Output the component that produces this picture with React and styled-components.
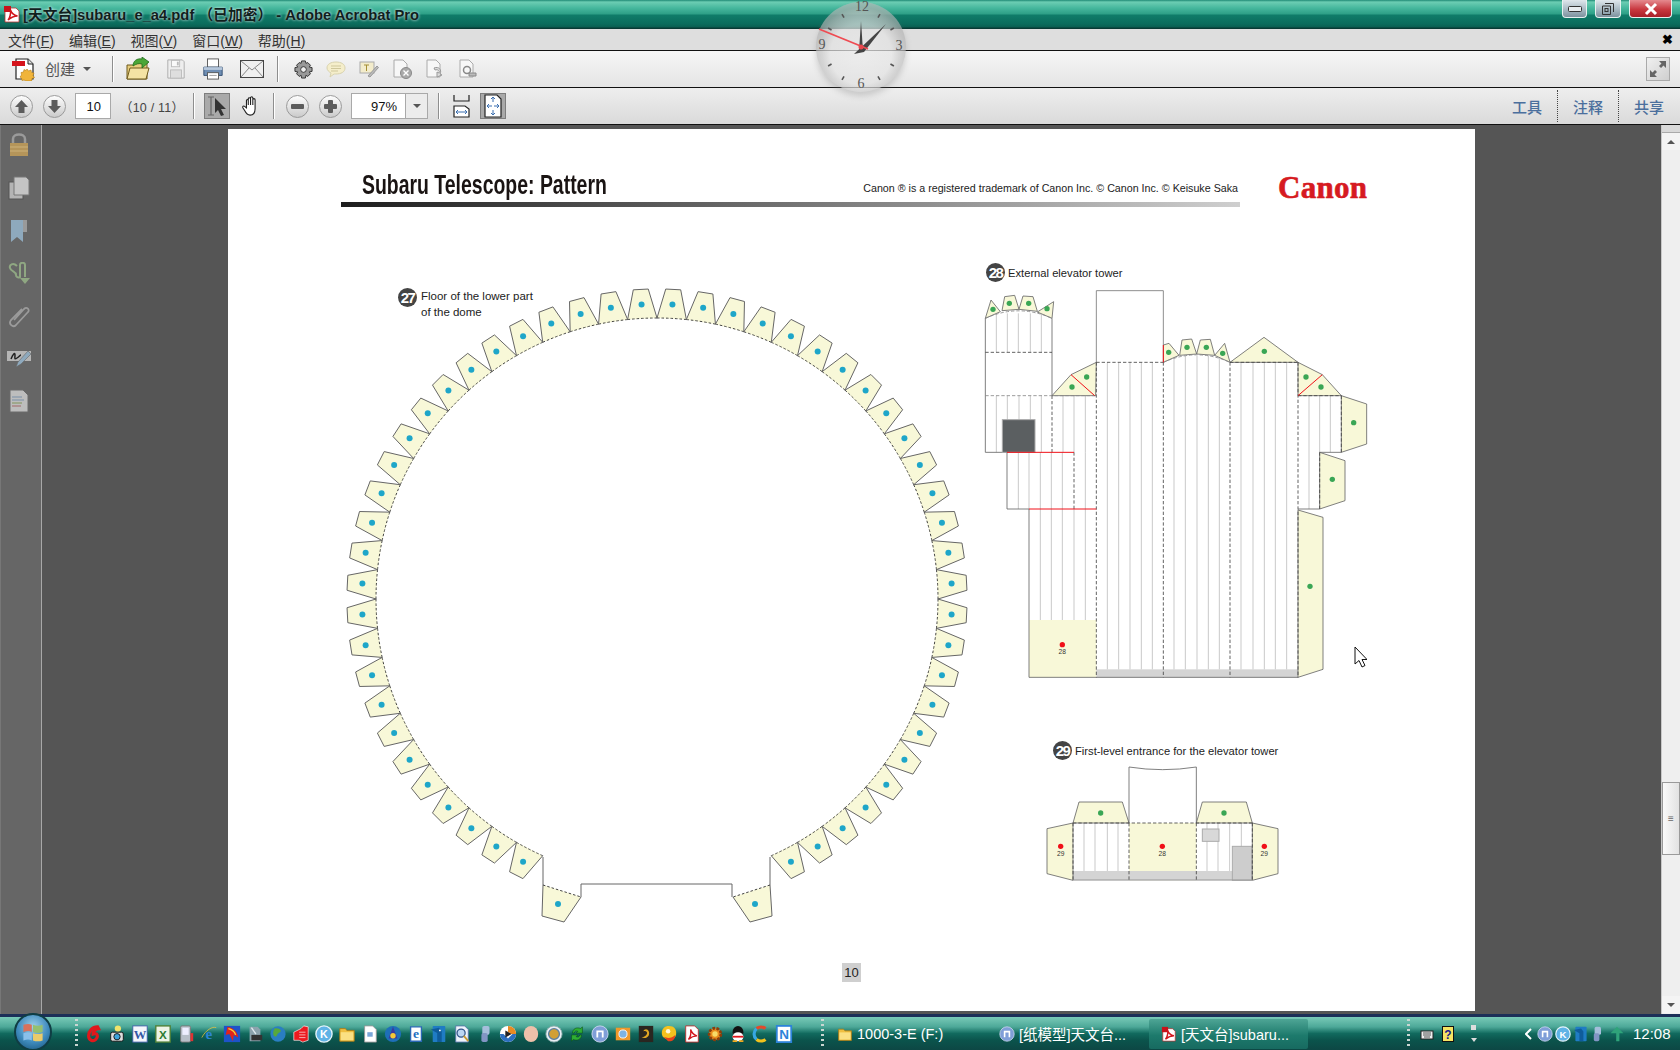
import React from "react";
import styled, { createGlobalStyle } from "styled-components";

const Global = createGlobalStyle`
  html, body { margin: 0; padding: 0; background: #555; }
  * { box-sizing: border-box; }
  body { font-family: "Liberation Sans", "Noto Sans CJK SC", sans-serif; }
`;

const Win = styled.div`
  position: relative;
  width: 1680px;
  height: 1050px;
  overflow: hidden;
  display: flex;
  flex-direction: column;
`;

const TitleBar = styled.div`
  height: 29px;
  flex: none;
  display: flex;
  align-items: flex-start;
  padding-left: 3px;
  background: linear-gradient(#1f8a75 0, #6ccdb3 2px, #46b79d 8px, #2d9f86 14px, #0f7c69 15px, #0b6c5c 24px, #0a5f52 27px, #083a34 28px);
`;

const TitleIcon = styled.div`
  margin-top: 5px;
`;

const TitleText = styled.span`
  margin: 6px 0 0 2px;
  font-size: 14.75px;
  font-weight: 700;
  line-height: 18px;
  color: #10201d;
  text-shadow: 0 0 3px #fff;
  white-space: nowrap;
`;

const WinButtons = styled.div`
  margin-left: auto;
  display: flex;
  padding-right: 8px;
`;

const WinButton = styled.div`
  width: ${p => p.$w}px;
  margin-left: ${p => p.$ml}px;
  height: 18px;
  display: flex;
  align-items: center;
  justify-content: center;
  border: 1px solid #e8f2f0;
  border-top: 0;
  border-radius: 0 0 4px 4px;
  background: ${p => (p.$close ? "linear-gradient(#e58a8f, #c8383f 55%, #a81f28)" : "linear-gradient(#dfe7ec, #a9bac4 55%, #7d929e)")};
`;

const MenuBar = styled.div`
  height: 21px;
  flex: none;
  display: flex;
  align-items: center;
  gap: 15px;
  padding-left: 8px;
  background: #dedede;
  font-size: 14px;
  color: #333;
`;

const MenuClose = styled.span`
  margin-left: auto;
  padding-right: 7px;
  font-size: 13px;
  font-weight: 700;
  color: #000;
`;

const Under = styled.span`
  text-decoration: underline;
`;

const ToolRow = styled.div`
  height: 37px;
  flex: none;
  display: flex;
  align-items: center;
  border-top: 1px solid #111;
  padding: 0 ${p => p.$pr}px 0 ${p => p.$pl}px;
  background: ${p => (p.$alt ? "linear-gradient(#eeeeee, #dadada)" : "linear-gradient(#f6f6f6, #e4e4e4)")};
`;

const Group = styled.div`
  display: flex;
  align-items: center;
  gap: ${p => p.$gap}px;
`;

const Divider = styled.span`
  flex: none;
  width: 1px;
  height: 26px;
  margin: 0 ${p => p.$r}px 0 ${p => p.$l}px;
  background: #8e8e8e;
  box-shadow: 1px 0 0 #fff;
`;

const CreateLabel = styled.span`
  font-size: 15px;
  color: #555;
  width: 30px;
  margin-bottom: 2px;
  white-space: nowrap;
`;

const Caret = styled.span`
  width: 0;
  height: 0;
  margin-left: ${p => p.$ml || 0}px;
  border: 4px solid transparent;
  border-top: 4px solid #555;
  border-bottom: 0;
  transform: ${p => (p.$up ? "rotate(180deg)" : "none")};
`;

const PageInput = styled.div`
  width: 36px;
  height: 26px;
  margin-left: 9px;
  background: #fff;
  border: 1px solid #a9a9a9;
  font-size: 13px;
  color: #111;
  display: flex;
  align-items: center;
  justify-content: flex-end;
  padding-right: 9px;
`;

const PageCount = styled.span`
  margin-left: 9px;
  width: 59px;
  font-size: 12.5px;
  letter-spacing: 0.2px;
  color: #444;
  white-space: nowrap;
`;

const PressedBox = styled.div`
  width: 26px;
  height: 26px;
  display: flex;
  align-items: center;
  justify-content: center;
  background: #a9a9a9;
  border: 1px solid #7d7d7d;
`;

const ZoomField = styled.div`
  display: flex;
  width: 77px;
  height: 26px;
  margin-left: 9px;
  border: 1px solid #a9a9a9;
`;

const ZoomValue = styled.div`
  width: 54px;
  background: #fff;
  font-size: 13px;
  color: #111;
  display: flex;
  align-items: center;
  justify-content: flex-end;
  padding-right: 8px;
  border-right: 1px solid #a9a9a9;
`;

const ZoomDrop = styled.div`
  flex: 1;
  display: flex;
  align-items: center;
  justify-content: center;
  background: #ececec;
`;

const ExpandBox = styled.div`
  margin-left: auto;
  width: 24px;
  height: 24px;
  display: flex;
  align-items: center;
  justify-content: center;
  border: 1px solid #aaa;
  background: linear-gradient(135deg, #f0f0f0, #cfcfcf);
`;

const SideTabs = styled.div`
  margin-left: auto;
  display: flex;
  height: 32px;
`;

const SideTab = styled.div`
  display: flex;
  align-items: center;
  padding: 0 ${p => (p.$last ? 0 : 15)}px 0 ${p => (p.$first ? 0 : 15)}px;
  font-size: 15px;
  font-weight: 500;
  color: #4b6f9d;
  border-left: ${p => (p.$first ? "0" : "1px dotted #444")};
  white-space: nowrap;
`;

const DocArea = styled.div`
  flex: 1;
  min-height: 0;
  display: flex;
  border-top: 1px solid #111;
`;

const Rail = styled.div`
  width: 42px;
  flex: none;
  display: flex;
  flex-direction: column;
  align-items: center;
  gap: 19px;
  padding: 8px 4px 0 0;
  background: #666;
  border-right: 1px solid #a8a8a8;
  box-shadow: inset 1px 0 0 #777;
`;

const Viewer = styled.div`
  flex: 1;
  display: flex;
  justify-content: center;
  padding-top: 4px;
  background: #555;
`;

const Page = styled.div`
  position: relative;
  width: 1247px;
  height: 882px;
  background: #fff;
  display: flex;
  flex-direction: column;
`;

const PageHeader = styled.header`
  display: flex;
  padding-left: 113px;
`;

const HeaderMain = styled.div`
  width: 899px;
`;

const HeaderLine = styled.div`
  height: 73px;
  display: flex;
  justify-content: space-between;
  align-items: flex-end;
  padding: 0 2px 7px 21px;
`;

const DocTitle = styled.h1`
  margin: 0 0 -5px;
  font-size: 27px;
  line-height: 30px;
  font-weight: 700;
  color: #1a1413;
  white-space: nowrap;
  transform: scaleX(0.72);
  transform-origin: left center;
`;

const Copyright = styled.span`
  font-size: 10.7px;
  line-height: 14px;
  color: #222;
  white-space: nowrap;
`;

const Rule = styled.div`
  height: 5px;
  background: linear-gradient(90deg, #1d1d1d, #6a6a6a 45%, #cfcfcf);
`;

const Canon = styled.div`
  margin: 44px 0 0 38px;
  font-family: "Liberation Serif", serif;
  font-size: 31px;
  line-height: 30px;
  font-weight: 700;
  letter-spacing: 0.3px;
  color: #d61a21;
  -webkit-text-stroke: 0.6px #d61a21;
`;

const PageBody = styled.div`
  display: grid;
  grid-template-columns: 640px 390px;
  column-gap: 6px;
  margin-top: 56px;
  padding-left: 109px;
`;

const RingFigure = styled.figure`
  position: relative;
  margin: 19px 0 0;
`;

const RingCaption = styled.figcaption`
  position: absolute;
  left: 61px;
  top: 6px;
  display: flex;
  gap: 4px;
`;

const CaptionText = styled.span`
  font-size: ${p => p.$size || 11.2}px;
  line-height: 16px;
  color: #222;
  white-space: nowrap;
`;

const Bubble = styled.span`
  flex: none;
  width: 19px;
  height: 19px;
  border-radius: 50%;
  background: #444;
  color: #fff;
  font-size: 15px;
  font-weight: 700;
  letter-spacing: -1.5px;
  display: flex;
  align-items: center;
  justify-content: center;
`;

const Figure = styled.figure`
  margin: ${p => p.$top}px 0 0 ${p => p.$left}px;
`;

const Caption = styled.figcaption`
  display: flex;
  align-items: center;
  gap: 3px;
  padding-left: ${p => p.$pl}px;
  margin-bottom: ${p => p.$mb}px;
`;

const PageFoot = styled.footer`
  margin-top: auto;
  padding-bottom: 29px;
  display: flex;
  justify-content: center;
`;

const PageNumber = styled.span`
  width: 19px;
  height: 19px;
  background: #cfcfcf;
  font-size: 13px;
  color: #222;
  display: flex;
  align-items: center;
  justify-content: center;
`;

const Pointer = styled.svg`
  position: absolute;
  left: 1126px;
  top: 517px;
`;

const ScrollBar = styled.div`
  width: 19px;
  flex: none;
  display: flex;
  flex-direction: column;
  background: #efefef;
  border-left: 1px solid #c8c8c8;
`;

const ScrollCap = styled.div`
  height: 8px;
  background: #d9d9d9;
  border-bottom: 1px solid #aaa;
`;

const ScrollArrow = styled.div`
  height: 17px;
  display: flex;
  align-items: center;
  justify-content: center;
  background: #f4f4f4;
  margin-top: ${p => p.$top || 0}px;
`;

const Thumb = styled.div`
  height: 73px;
  margin-top: 632px;
  display: flex;
  align-items: center;
  justify-content: center;
  background: linear-gradient(90deg, #fafafa, #e2e2e2);
  border: 1px solid #9a9a9a;
  font-size: 10px;
  line-height: 3px;
  color: #666;
`;

const Taskbar = styled.div`
  position: relative;
  height: 36px;
  flex: none;
  display: flex;
  align-items: center;
  padding-left: 14px;
  border-top: 3px solid #1c2f58;
  background: linear-gradient(#79cab8, #4da898 30%, #116a5e 50%, #0b544c 70%, #0d4744);
  color: #fff;
  font-size: 14.5px;
`;

const Orb = styled.div`
  flex: none;
  width: 38px;
  height: 38px;
  margin-top: -3px;
  border-radius: 50%;
  border: 2px solid #0f3d44;
  background: radial-gradient(circle at 50% 35%, #9fd0ea, #3f8bbd 55%, #155077);
  display: flex;
  align-items: center;
  justify-content: center;
`;

const Grip = styled.span`
  flex: none;
  width: 3px;
  height: 30px;
  margin-left: ${p => p.$ml}px;
  background: repeating-linear-gradient(#c9d6d2 0 2px, transparent 2px 5px);
`;

const Launch = styled.div`
  display: flex;
  gap: 5px;
  margin-left: 7px;
`;

const TaskList = styled.div`
  display: flex;
  gap: 3px;
  margin-left: 1px;
`;

const TaskButton = styled.div`
  width: 159px;
  height: 30px;
  display: flex;
  align-items: center;
  gap: 4px;
  padding-left: 12px;
  white-space: nowrap;
  background: ${p => (p.$active ? "linear-gradient(#4ea595, #1d7a6c 55%, #176a60)" : "none")};
  border-radius: 2px;
`;

const Tray = styled.div`
  display: flex;
  align-items: center;
  margin-left: 10px;
`;

const TrayClock = styled.span`
  margin-left: 8px;
  font-size: 15px;
`;

const TraySpacer = styled.span`
  width: ${p => p.$w}px;
`;

const Svg = styled.svg`
  display: block;
  flex: none;
`;

const Ico = ({ w = 20, h, vb, children }) => (
  <Svg width={w} height={h || w} viewBox={vb || `0 0 ${w} ${h || w}`}>
    {children}
  </Svg>
);

/* ---------- toolbar icons ---------- */

const PdfMark = ({ size = 18 }) => (
  <Ico w={size} vb="0 0 18 18">
    <path d="M2 3h11l3 3v11H2z" fill="#fff" stroke="#b33" strokeWidth=".8" />
    <path d="M1 1h7v6H1z" fill="#c8121a" />
    <path d="M5 15c2-2 3-7 2.500-10 1 3 3 5 7 6-3 0-6 1-9.500 4z" fill="none" stroke="#d2161d" strokeWidth="1.600" />
  </Ico>
);

const CreateIcon = () => (
  <Ico w={24} vb="0 0 24 24">
    <path d="M4 2h12l5 5v15H4z" fill="#fff" stroke="#222" strokeWidth="1.200" />
    <path d="M16 2v5h5" fill="#ddd" stroke="#222" />
    <rect x="0" y="4" width="13" height="5" fill="#d5141c" />
    <path d="M15 12l1.500 2 2.500-1 .5 2.500 2.500.5-1 2.500 1.500 2-2.500 1-.5 2.500H14l-2-1-2 .5-.5-2.500L8 20l1.500-2L9 15.500l2.500-.5.5-2.500 2 1z" fill="#f0b43a" stroke="#b67c12" strokeWidth=".6" />
  </Ico>
);

const FolderIcon = () => (
  <Ico w={24} vb="0 0 24 24">
    <path d="M1 8h7l2-2h11v16H1z" fill="#e7cd7e" stroke="#6f5a1c" />
    <path d="M1 22l3-11h19l-3 11z" fill="#f4e3a4" stroke="#6f5a1c" />
    <path d="M7 9c0-5 4-8 9-7V0l7 5-7 6V7c-3-1-6 0-9 2z" fill="#4aa637" stroke="#1f6d1a" strokeWidth=".8" />
  </Ico>
);

const SaveIcon = () => (
  <Ico w={20} vb="0 0 20 22">
    <path d="M1 1h16l2 2v18H1z" fill="#eee" stroke="#aaa" />
    <rect x="5" y="1.500" width="9" height="7" fill="#fafafa" stroke="#bbb" />
    <rect x="11" y="3" width="2" height="4" fill="#bbb" />
    <rect x="4" y="12" width="12" height="9" fill="#dedede" stroke="#bbb" />
  </Ico>
);

const PrintIcon = () => (
  <Ico w={22} vb="0 0 22 24">
    <rect x="5" y="1" width="12" height="9" fill="#fff" stroke="#555" />
    <path d="M1 10h20v9H1z" fill="#6f8eb3" stroke="#2e4a6e" />
    <rect x="1" y="10" width="20" height="3" fill="#b7c8dc" />
    <rect x="5" y="16" width="12" height="7" fill="#fff" stroke="#555" />
    <path d="M7 19h8" stroke="#999" />
  </Ico>
);

const MailIcon = () => (
  <Ico w={24} h={18} vb="0 0 24 18">
    <rect x=".5" y=".5" width="23" height="17" fill="#f0f0f0" stroke="#444" />
    <path d="M1 1l11 9 11-9M1 17l8-9M23 17l-8-9" fill="none" stroke="#888" />
  </Ico>
);

const GearIcon = () => (
  <Ico w={19} vb="0 0 20 20">
    <path d="M8 1h4l.5 2.500 2-.8 2.800 2.800-1.200 2 2.900.5v4l-2.900.5 1.200 2-2.800 2.800-2-1.200L12 19H8l-.5-2.900-2 1.200-2.800-2.800 1.200-2L1 12V8l2.900-.5-1.200-2 2.800-2.800 2 .8z" fill="#999" stroke="#333" />
    <circle cx="10" cy="10" r="3" fill="#eee" stroke="#333" />
  </Ico>
);

const CommentIcon = () => (
  <Ico w={20} vb="0 0 20 20">
    <path d="M10 3c5 0 9 2 9 6s-4 6-9 6c-1 0-2 0-2 0l-4 3 1-4C3 13 1 11 1 9c0-4 4-6 9-6z" fill="#f5eecb" stroke="#d8d2ae" />
    <path d="M5 7h10M5 9.500h10M5 12h7" stroke="#cfc79b" />
  </Ico>
);

const TextEditIcon = () => (
  <Ico w={20} vb="0 0 20 20">
    <rect x="1" y="3" width="14" height="11" fill="#f3eccb" stroke="#aaa" />
    <path d="M5 6h5M7.500 6v6" stroke="#a58f35" />
    <path d="M9 17l9-10 1.500 1.500L11 18z" fill="#bbb" stroke="#999" />
  </Ico>
);

const DocBadge = ({ kind }) => (
  <Ico w={20} vb="0 0 20 20">
    <path d="M2 1h9l4 4v13H2z" fill="#f7f7f7" stroke="#aaa" />
    {kind === "x" && <><circle cx="14" cy="14" r="5.500" fill="#aaa" stroke="#888" /><path d="M11.500 11.500l5 5m0-5l-5 5" stroke="#fff" strokeWidth="1.400" /></>}
    {kind === "swirl" && <path d="M9 9c5-2 8 2 6 6l2 1-5 2 0-5 2 1c1-2-1-4-4-3z" fill="#ddd" stroke="#999" />}
    {kind === "lock" && <><circle cx="9" cy="11" r="3.500" fill="none" stroke="#888" strokeWidth="1.500" /><path d="M11 14h7v3h-7z" fill="#bbb" stroke="#888" /></>}
  </Ico>
);

const RoundArrow = ({ down }) => (
  <Ico w={23} vb="0 0 23 23">
    <defs>
      <linearGradient id="rb" x1="0" y1="0" x2="0" y2="1">
        <stop offset="0" stopColor="#fff" />
        <stop offset="1" stopColor="#c9c9c9" />
      </linearGradient>
    </defs>
    <circle cx="11.500" cy="11.500" r="11" fill="url(#rb)" stroke="#9a9a9a" />
    <path d={down ? "M8.500 5h6v6h3.500l-6.500 7L5 11h3.500z" : "M8.500 18h6v-6h3.500l-6.500-7L5 12h3.500z"} fill="#5c5c5c" />
  </Ico>
);

const RoundSign = ({ plus }) => (
  <Ico w={23} vb="0 0 23 23">
    <circle cx="11.500" cy="11.500" r="11" fill="url(#rb)" stroke="#9a9a9a" />
    <rect x="5" y="9" width="13" height="5" rx="1" fill="#5c5c5c" />
    {plus && <rect x="9" y="5" width="5" height="13" rx="1" fill="#5c5c5c" />}
  </Ico>
);

const SelectIcon = () => (
  <Ico w={22} vb="0 0 22 22">
    <path d="M2 2h6M2 20h6M5 2v18" stroke="#666" strokeWidth="1.200" fill="none" />
    <path d="M9 3l11 11h-5l3 6-3 1-3-6-3 3z" fill="#333" />
  </Ico>
);

const HandIcon = () => (
  <Ico w={20} vb="0 0 20 22">
    <path d="M5 13V5c0-1.500 2-1.500 2 0v5-7c0-1.500 2.500-1.500 2.500 0v7-8c0-1.500 2.500-1.500 2.500 0v8-6c0-1.500 2.500-1.500 2.500 0v10c0 4-2 7-5.500 7S4.500 19 3 16l-2-3c-.7-1.500 1-2.500 2-1.500z" fill="#fff" stroke="#222" strokeWidth="1.200" />
  </Ico>
);

const FitWidthIcon = () => (
  <Ico w={17} h={24} vb="0 0 17 24">
    <path d="M1 1v6h15V1" fill="none" stroke="#222" strokeWidth="1.200" />
    <path d="M1 23v-11h11l4 3v8z" fill="#fff" stroke="#222" strokeWidth="1.200" />
    <path d="M3 18h11M3 18l2-2m-2 2l2 2m9-2l-2-2m2 2l-2 2" stroke="#3b6fb0" fill="none" />
  </Ico>
);

const FitPageIcon = () => (
  <Ico w={20} h={24} vb="0 0 20 24">
    <path d="M2 1h12l4 4v18H2z" fill="#fff" stroke="#222" strokeWidth="1.200" />
    <path d="M10 3v5M10 16v5M4 12h5M11 12h5M10 3L8 5m2-2l2 2M10 21l-2-2m2 2l2-2M4 12l2-2m-2 2l2 2m10-2l-2-2m2 2l-2 2" stroke="#3b6fb0" fill="none" />
  </Ico>
);

const ExpandIcon = () => (
  <Ico w={20} vb="0 0 20 20">
    <path d="M11 2h7v7l-2.500-2.500L13 9l-2-2 2.500-2.500zM9 18H2v-7l2.500 2.500L7 11l2 2-2.500 2.500z" fill="#666" />
  </Ico>
);

/* ---------- left rail, dimmed ---------- */

const railIcons = [
  <Ico key="lock" w={22} h={24} vb="0 0 22 24">
    <path d="M5 11V6c0-6 12-6 12 0v5" fill="none" stroke="#9a9a9a" strokeWidth="2.500" />
    <rect x="2" y="10" width="18" height="13" fill="#b5955a" />
    <path d="M2 14h18M2 18h18" stroke="#cdb27a" />
  </Ico>,
  <Ico key="pages" w={22} h={24} vb="0 0 22 24">
    <rect x="1" y="6" width="14" height="17" fill="#b4b4b4" stroke="#555" />
    <path d="M6 1h12l3 3v15H6z" fill="#c4c4c4" stroke="#777" />
  </Ico>,
  <Ico key="mark" w={22} h={24} vb="0 0 22 24">
    <path d="M3 1h12v22l-6-5-6 5z" fill="#8ea9bd" />
    <path d="M15 1h4v12h-4z" fill="#9a9a9a" />
  </Ico>,
  <Ico key="sign" w={22} h={24} vb="0 0 22 24">
    <path d="M9 4C5 0 1 3 2 6c1 4 6 3 6 7 0 2 2 3 4 2V3c0-3 5-3 5 0v12" fill="none" stroke="#8fa782" strokeWidth="2" />
    <path d="M12 16h10l-5 6z" fill="#8fa782" />
  </Ico>,
  <Ico key="clip" w={22} h={24} vb="0 0 22 24">
    <path d="M6 15L16 4c3-3 6 1 4 3L8 20c-3 3-8-1-5-5L14 4" fill="none" stroke="#9b9b9b" strokeWidth="1.800" />
  </Ico>,
  <Ico key="pen" w={24} h={22} vb="0 0 24 22">
    <path d="M0 3h24v10H0z" fill="#b5b5b5" />
    <path d="M4 11c2-5 4-7 4-4s-1 5 2 3 3-3 4-3" fill="none" stroke="#222" strokeWidth="1.500" />
    <path d="M9 19l2-5L21 3l3 3-10 10z" fill="#8ea9bd" stroke="#666" strokeWidth=".6" />
  </Ico>,
  <Ico key="doc" w={20} h={24} vb="0 0 20 24">
    <path d="M1 1h13l5 5v17H1z" fill="#bdbdbd" stroke="#6a6a6a" />
    <path d="M3 8h10M3 11h12" stroke="#7b90a8" strokeWidth="1.200" />
    <path d="M3 14h10" stroke="#8a9a6b" strokeWidth="1.200" />
    <path d="M3 17h9" stroke="#a57575" strokeWidth="1.200" />
  </Ico>,
];

/* ---------- taskbar icons ---------- */

const Quick = ({ children }) => (
  <Ico w={18} vb="0 0 20 20">
    {children}
  </Ico>
);

const Letter = ({ x = 10, y = 15, size = 13, fill, font = "Liberation Sans", children }) => (
  <text x={x} y={y} textAnchor="middle" fontFamily={font} fontWeight="700" fontSize={size} fill={fill}>
    {children}
  </text>
);

const BlueM = () => (
  <>
    <circle cx="10" cy="10" r="9" fill="#7f9ed8" stroke="#cdd8f0" />
    <path d="M6 14V6h8v8h-2V8H8v6z" fill="#fff" />
  </>
);

const KBall = () => (
  <>
    <circle cx="10" cy="10" r="9" fill="#5fb3e6" stroke="#e5f4fb" strokeWidth="1.500" />
    <Letter fill="#fff" size={12} y={14.500}>K</Letter>
  </>
);

const launchIcons = [
  <path key="a" d="M14 2c-6 0-10 5-10 10 0 5 5 7 8 4 3-3 2-8-3-6 0-3 3-6 6-6z" fill="none" stroke="#e0181c" strokeWidth="3.500" />,
  <g key="b"><circle cx="11" cy="4" r="3.500" fill="#f1e36b" /><rect x="3" y="8" width="14" height="10" rx="2" fill="#ddd" stroke="#111" /><circle cx="10" cy="13" r="3.500" fill="#3da4dc" stroke="#111" /></g>,
  <g key="c"><rect x="2" y="1" width="16" height="18" fill="#f4f6fc" stroke="#3e5fa8" /><Letter fill="#3557a6" font="Liberation Serif" size={14} y={15}>W</Letter></g>,
  <g key="d"><rect x="2" y="1" width="16" height="18" fill="#eef4e6" stroke="#4d7f35" strokeWidth="1.500" /><Letter fill="#2d7a33" size={13} y={15}>X</Letter></g>,
  <g key="e"><rect x="4" y="1" width="11" height="18" rx="1.500" fill="#b8bfc9" stroke="#777" /><rect x="6" y="3" width="7" height="8" fill="#eef" /><rect x="15" y="9" width="3" height="9" fill="#d33" /></g>,
  <g key="f"><Letter fill="#2c84d2" font="Liberation Serif" size={17} y={15}>e</Letter><path d="M2 14c4-8 12-13 16-11" fill="none" stroke="#f0c43b" strokeWidth=".8" /></g>,
  <g key="g"><rect x="1" y="1" width="18" height="18" fill="#1e53c9" /><path d="M5 2c6 1 11 5 12 12l-5-3-1 7-4-8-4 1z" fill="#e2231a" /><path d="M6 4c4 1 7 3 8 7" stroke="#f4d33a" strokeWidth="1.500" fill="none" /></g>,
  <g key="h"><path d="M4 2h9l3 3v13H4z" fill="#8ca3ad" /><rect x="6" y="11" width="12" height="6" fill="#333" /><path d="M6 3l5 7" stroke="#dfe9ee" strokeWidth="1.500" /></g>,
  <g key="i"><circle cx="10" cy="10" r="8.500" fill="#2a7ec2" /><path d="M6 4c3-1 6 0 7 2s-3 2-4 5-3 2-4 0 0-5 1-7z" fill="#57a83d" /></g>,
  <path key="j" d="M2 8l8-4 3-3 5 1v15l-6 2-4-2-6 0zM8 8h7M8 11h7M8 14h7" fill="#ec1a1f" stroke="#fff" strokeWidth=".7" />,
  <g key="k"><KBall /></g>,
  <g key="l"><path d="M2 4h6l2 2h8v12H2z" fill="#f0bf41" stroke="#ad7d16" /><rect x="3" y="8" width="14" height="9" fill="#fbe083" /></g>,
  <g key="m"><path d="M4 1h9l4 4v14H4z" fill="#fff" stroke="#999" /><rect x="7" y="8" width="6" height="5" fill="#7aa6d8" /></g>,
  <g key="n"><circle cx="10" cy="10" r="9" fill="#1e6fb8" /><path d="M10 2l5 13H5z" fill="#3a3aa0" /><circle cx="10" cy="12" r="3" fill="#f3c938" /></g>,
  <g key="o"><path d="M4 2h12v16H4z" fill="#fff" stroke="#2a68b5" strokeWidth="1.500" /><Letter fill="#1f6ec0" font="Liberation Serif" size={15} y={14}>e</Letter></g>,
  <g key="p"><rect x="3" y="1" width="14" height="18" rx="1" fill="#1f7cc4" /><path d="M1 5l9-2 3 4v12H8V9z" fill="#0f5c9b" /><circle cx="11" cy="6" r="1" fill="#fff" /></g>,
  <g key="q"><path d="M3 1h10l4 4v14H3z" fill="#eef3fb" stroke="#5677a8" /><circle cx="9" cy="9" r="4.500" fill="#bcd6f3" stroke="#34558a" strokeWidth="1.400" /><path d="M12 12l5 6" stroke="#c99b34" strokeWidth="2" /></g>,
  <g key="r"><rect x="7" y="1" width="8" height="10" rx="2" fill="#a5bedb" /><rect x="6" y="9" width="7" height="10" rx="2" fill="#8295c4" /></g>,
  <g key="s"><circle cx="10" cy="10" r="9" fill="#fff" /><path d="M10 1a9 9 0 0 1 9 9h-6l-3-3z" fill="#e98a22" /><path d="M1 10a9 9 0 0 0 9 9 9 9 0 0 0 9-9h-4l-5 5-5-5z" fill="#2b6fc0" /><path d="M7 6l7 4-7 4z" fill="#222" /></g>,
  <ellipse key="t" cx="10" cy="10" rx="8" ry="9" fill="#eec0aa" />,
  <g key="u"><circle cx="10" cy="10" r="9" fill="#e9eef4" stroke="#8aa" /><circle cx="10" cy="10" r="6" fill="#d19f36" stroke="#5a7fa5" strokeWidth="1.500" /></g>,
  <path key="v" d="M5 9c0-5 5-7 9-5l2-2v7h-7l2-2c-2-1-4 0-4 2zM15 11c0 5-5 7-9 5l-2 2v-7h7l-2 2c2 1 4 0 4-2z" fill="#2fae34" stroke="#0b4d13" strokeWidth=".6" />,
  <g key="w"><BlueM /></g>,
  <g key="x"><rect x="2" y="3" width="16" height="14" fill="#f0982a" /><circle cx="10" cy="10" r="4.500" fill="#7fb3e2" stroke="#fff" /></g>,
  <g key="y"><rect x="2" y="1" width="16" height="18" fill="#2a2620" /><path d="M5 14c6 2 10-2 8-7-1-3-5-3-6 0 3-1 5 1 4 3s-3 3-6 4z" fill="#e0a623" /></g>,
  <g key="z"><path d="M10 1c6 0 8 4 8 8 0 6-4 7-8 7s-8-2-8-7 3-8 8-8z" fill="#f4c21e" /><path d="M4 13c4 2 9 2 13-2 0 5-4 8-8 7z" fill="#e3431d" /><circle cx="9" cy="7" r="2.500" fill="#fff8d8" /></g>,
  <g key="aa"><path d="M3 1h10l4 4v14H3z" fill="#fff" stroke="#b33" /><path d="M6 16c2-2 3-7 2.500-11 1 3 3 6 7 7-3 0-6 1-9.500 4z" fill="none" stroke="#d2161d" strokeWidth="1.500" /></g>,
  <g key="ab"><circle cx="10" cy="10" r="6.500" fill="#e88c1d" stroke="#8c3d0b" strokeWidth="3" strokeDasharray="3 1.500" /><circle cx="10" cy="10" r="3" fill="#f7dc68" /></g>,
  <g key="ac"><ellipse cx="10" cy="8" rx="6" ry="7" fill="#111" /><ellipse cx="10" cy="13" rx="6" ry="5" fill="#fff" /><path d="M4 12h12v2H4z" fill="#e0161c" /><path d="M4 18h5M11 18h5" stroke="#f0a91e" strokeWidth="2" /></g>,
  <g key="ad"><path d="M15 4A8 8 0 0 0 5 4" fill="none" stroke="#e24a2c" strokeWidth="3.500" /><path d="M5 4A8 8 0 0 0 5 16" fill="none" stroke="#37a8e2" strokeWidth="3.500" /><path d="M5 16A8 8 0 0 0 15 16" fill="none" stroke="#f3c21c" strokeWidth="3.500" /></g>,
  <g key="ae"><rect x="2" y="1" width="16" height="18" fill="#fff" stroke="#2c83d9" strokeWidth="2" /><Letter fill="#2c83d9" size={15} y={15.500}>N</Letter></g>,
];

const OrbFlag = () => (
  <Ico w={24} vb="0 0 20 20">
    <path d="M2 4c3-1 5-1 7 0v6c-2-1-4-1-7 0z" fill="#d8715c" />
    <path d="M10 4c3 1 5 1 8 0v6c-3 1-5 1-8 0z" fill="#94c070" />
    <path d="M2 11c3-1 5-1 7 0v6c-2-1-4-1-7 0z" fill="#8ac0ea" />
    <path d="M10 11c3 1 5 1 8 0v6c-3 1-5 1-8 0z" fill="#eacb6a" />
  </Ico>
);

/* ---------- desktop clock ---------- */

const ClockBox = styled.svg`
  position: absolute;
  left: 799px;
  top: -15px;
  pointer-events: none;
`;

const Clock = () => {
  const ticks = [1, 2, 4, 5, 7, 8, 10, 11].map(h => {
    const a = (h * 30 * Math.PI) / 180;
    return (
      <line
        key={h}
        x1={62 + Math.sin(a) * 34}
        y1={62 - Math.cos(a) * 34}
        x2={62 + Math.sin(a) * 38}
        y2={62 - Math.cos(a) * 38}
        stroke="#555"
        strokeWidth="1.600"
      />
    );
  });
  return (
    <ClockBox width="124" height="124" viewBox="0 0 124 124">
      <defs>
        <radialGradient id="face" cx="50%" cy="58%" r="52%">
          <stop offset="0" stopColor="#fff" stopOpacity=".5" />
          <stop offset=".65" stopColor="#fafafa" stopOpacity=".45" />
          <stop offset="1" stopColor="#a5a5a5" stopOpacity=".5" />
        </radialGradient>
        <filter id="soft" x="-20%" y="-20%" width="140%" height="140%">
          <feGaussianBlur stdDeviation="3" />
        </filter>
      </defs>
      <circle cx="62" cy="66" r="45" fill="#777" opacity=".3" filter="url(#soft)" />
      <circle cx="62" cy="62" r="45" fill="#fff" opacity=".25" />
      <circle cx="62" cy="62" r="45" fill="url(#face)" />
      {ticks}
      <g fontFamily="Liberation Serif" fontSize="14" fill="#555" textAnchor="middle">
        <text x="63" y="26">12</text>
        <text x="100" y="65">3</text>
        <text x="62" y="103">6</text>
        <text x="23" y="64">9</text>
      </g>
      <path d="M55 69L87 39 65 67z" fill="#444" />
      <path d="M60 66l2-30 2 30z" fill="#444" />
      <path d="M20 44l49 20" stroke="#ef4b52" strokeWidth="1.800" />
      <circle cx="62" cy="62" r="2.500" fill="#e8474d" />
    </ClockBox>
  );
};

/* ---------- pattern drawings ---------- */

const FILL = "#f8f8d8";
const EDGE = "#666";
const DASH = "#444";
const CYAN = "#1ea6c9";
const GREEN = "#3aa655";
const RED = "#f01018";

const polar = (deg, r) => {
  const a = (deg * Math.PI) / 180;
  return [320 + Math.sin(a) * r, 317 - Math.cos(a) * r];
};

const RingTab = ({ deg }) => {
  const base0 = polar(deg - 3, 281);
  const base1 = polar(deg + 3, 281);
  const a = (deg * Math.PI) / 180;
  const [mx, my] = polar(deg, 310);
  const off = 7.5;
  const top0 = [mx - Math.cos(a) * off, my - Math.sin(a) * off];
  const top1 = [mx + Math.cos(a) * off, my + Math.sin(a) * off];
  const [dx, dy] = polar(deg, 295);
  const pts = [base0, top0, top1, base1].map(p => p.join(",")).join(" ");
  return (
    <g>
      <polygon points={pts} fill={FILL} />
      <polyline points={pts} fill="none" stroke={EDGE} strokeWidth="1" />
      <path d={`M${base0[0]} ${base0[1]}A281 281 0 0 1 ${base1[0]} ${base1[1]}`} fill="none" stroke={DASH} strokeWidth="1" strokeDasharray="2.500 2" />
      <circle cx={dx} cy={dy} r="3" fill={CYAN} />
    </g>
  );
};

const ringAngles = [];
for (let k = 0; k <= 25; k++) ringAngles.push(3 + 6 * k, -(3 + 6 * k));

const Ring = () => (
  <Svg width="640" height="650" viewBox="0 0 640 650">
    {ringAngles.map(d => (
      <RingTab key={d} deg={d} />
    ))}
    {/* bottom notch, coordinates relative to the ring box */}
    <polygon points="206,603 244,615 227,640 205,634" fill={FILL} />
    <polygon points="433,603 396,615 413,640 435,634" fill={FILL} />
    <path d="M206 575V603M244 615l-17 25-22-6 1-31M244 615V602H395V615M396 615l17 25 22-6-2-31M433 603V575" fill="none" stroke={EDGE} strokeWidth="1" />
    <path d="M206 603L244 615M433 603L396 615" fill="none" stroke={DASH} strokeWidth="1" strokeDasharray="2.500 2" />
    <circle cx="221" cy="622" r="3" fill={CYAN} />
    <circle cx="418" cy="622" r="3" fill={CYAN} />
  </Svg>
);

const Folds = ({ xs, y1, y2 }) => (
  <path d={xs.map(x => `M${x} ${y1}V${y2}`).join("")} stroke="#bebebe" strokeWidth="2.500" fill="none" />
);

const Flap = ({ points, dots, dotColor = GREEN }) => (
  <>
    <polygon points={points} fill={FILL} stroke={EDGE} strokeWidth="2.500" />
    {dots.map(([x, y]) => (
      <circle key={x + "-" + y} cx={x} cy={y} r="8" fill={dotColor} />
    ))}
  </>
);

const Dashed = ({ d, color = DASH }) => <path d={d} fill="none" stroke={color} strokeWidth="2.500" strokeDasharray="10 6" />;
const Solid = ({ d, color = EDGE, w = 2.5 }) => <path d={d} fill="none" stroke={color} strokeWidth={w} />;
const RedDot = ({ x, y, label }) => (
  <>
    <circle cx={x} cy={y} r="8" fill={RED} />
    <text x={x} y={y + 28} textAnchor="middle" fontFamily="Liberation Sans" fontSize="20" fill="#333">
      {label}
    </text>
  </>
);

const Tower = () => (
  <Svg width="390" height="390" viewBox="40 120 1170 1170">
    <rect x="178" y="1110" width="202" height="172" fill={FILL} />
    <rect x="380" y="1258" width="605" height="24" fill="#d4d4d4" />
    <Folds xs={[80, 113, 146, 182, 215]} y1={190} y2={307} />
    <Folds xs={[80, 113, 148, 182, 215]} y1={437} y2={607} />
    <Folds xs={[146, 178, 212, 245, 278]} y1={607} y2={777} />
    <Folds xs={[280, 313, 347]} y1={437} y2={607} />
    <Folds xs={[347]} y1={607} y2={777} />
    <Folds xs={[212, 245, 278, 313, 347]} y1={777} y2={1110} />
    <Folds xs={[413, 447, 481, 515, 548, 814, 850, 884, 917, 951]} y1={337} y2={1258} />
    <Folds xs={[613, 647, 682, 716, 749]} y1={318} y2={1258} />
    <Folds xs={[1018]} y1={437} y2={777} />
    <Folds xs={[1050, 1082]} y1={437} y2={607} />

    <Flap points="47,205 64,150 92,185" dots={[[70, 178]]} />
    <Flap points="97,182 105,140 135,136 148,178" dots={[[119, 160]]} />
    <Flap points="148,178 160,138 190,140 203,184" dots={[[177, 160]]} />
    <Flap points="203,186 252,155 247,205" dots={[[232, 176]]} />
    <Flap points="247,437 304,374 380,337 378,437" dots={[[307, 411], [351, 381]]} />
    <Flap points="581,337 581,285 598,280 628,316" dots={[[597, 307]]} />
    <Flap points="630,316 637,270 666,267 681,312" dots={[[652, 292]]} />
    <Flap points="681,312 692,270 722,268 735,316" dots={[[710, 292]]} />
    <Flap points="735,316 765,280 781,337" dots={[[759, 310]]} />
    <Flap points="781,337 883,262 985,337" dots={[[884, 304]]} />
    <Flap points="985,337 1058,374 1115,437 985,437" dots={[[1009, 381], [1054, 411]]} />
    <Flap points="1115,437 1191,462 1191,582 1115,607" dots={[[1152, 518]]} />
    <Flap points="1050,607 1126,632 1126,752 1050,777" dots={[[1088, 688]]} />
    <Flap points="985,780 1060,802 1060,1258 985,1282" dots={[[1021, 1009]]} />

    <Dashed d="M47 205Q147 160 247 205" color="#888" />
    <Dashed d="M581 337Q681 292 781 337" color="#888" />
    <Solid d="M47 205V607H112M247 205V437" />
    <Dashed d="M47 307H247" />
    <Dashed d="M47 437H378" color="#888" />
    <rect x="98" y="509" width="98" height="98" fill="#5b5f61" stroke="#aaa" strokeWidth="3" />
    <Dashed d="M247 437V607" />
    <Solid d="M112 607V777H178" />
    <Dashed d="M313 607V777" />
    <Solid d="M178 777V1282H985" />
    <Solid d="M380 337V122H581V285" color="#777" />
    <Dashed d="M380 337H581M781 337H985M985 437H1115" />
    <Dashed d="M380 337V1282M581 337V1282M781 337V1282M985 337V1282M1115 437V607M1050 607V777" />
    <Solid d="M1050 607H1115M985 777H1050" />
    <Solid d="M581 285V337" color={RED} w={3} />
    <Solid d="M112 607H313M178 777H380M304 374L375 437M985 437L1058 374" color={RED} w={3} />
    <RedDot x={278} y={1184} label="28" />
  </Svg>
);

const Entrance = () => (
  <Svg width="240" height="120" viewBox="40 100 720 360">
    <rect x="298" y="280" width="202" height="172" fill={FILL} />
    <rect x="130" y="424" width="538" height="28" fill="#d4d4d4" />
    <Folds xs={[163, 196, 233, 265, 532, 565, 600, 635]} y1={280} y2={424} />
    <Flap points="130,280 148,217 278,217 298,280" dots={[[213, 250]]} />
    <Flap points="500,280 518,217 650,217 668,280" dots={[[583, 250]]} />
    <polygon points="130,280 52,297 52,432 130,452" fill={FILL} stroke={EDGE} strokeWidth="2.500" />
    <polygon points="668,280 745,297 745,432 668,452" fill={FILL} stroke={EDGE} strokeWidth="2.500" />
    <Solid d="M298 280V112Q399 128 500 112V280" />
    <rect x="518" y="298" width="50" height="37" fill="#d8d8d8" stroke="#aaa" strokeWidth="3" />
    <rect x="608" y="350" width="58" height="102" fill="#cdcdcd" stroke="#aaa" strokeWidth="3" />
    <Solid d="M130 451H668" color="#999" w={3} />
    <Dashed d="M130 280H668M130 280V452M298 280V452M500 280V452M668 280V452" />
    <RedDot x={93} y={350} label="29" />
    <RedDot x={398} y={350} label="28" />
    <RedDot x={704} y={350} label="29" />
  </Svg>
);

const App = () => (
  <Win>
    <Global />
    <TitleBar>
      <TitleIcon>
        <PdfMark />
      </TitleIcon>
      <TitleText>[天文台]subaru_e_a4.pdf （已加密） - Adobe Acrobat Pro</TitleText>
      <WinButtons>
        <WinButton $w={25} $ml={0}>
          <Ico w={14} h={6} vb="0 0 14 6">
            <rect x=".5" y=".5" width="13" height="5" rx="1" fill="#e8edf0" stroke="#333" />
          </Ico>
        </WinButton>
        <WinButton $w={26} $ml={8}>
          <Ico w={12} vb="0 0 12 12">
            <path d="M3 .5h8.500V9M.5 3h8v8.500h-8z" fill="none" stroke="#333" />
            <rect x="3" y="5.500" width="3" height="3" fill="none" stroke="#333" />
          </Ico>
        </WinButton>
        <WinButton $w={43} $ml={8} $close>
          <Ico w={14} vb="0 0 14 14">
            <path d="M2 2l10 10M12 2L2 12" stroke="#fff" strokeWidth="3" />
          </Ico>
        </WinButton>
      </WinButtons>
    </TitleBar>

    <MenuBar>
      <span>文件(<Under>F</Under>)</span>
      <span>编辑(<Under>E</Under>)</span>
      <span>视图(<Under>V</Under>)</span>
      <span>窗口(<Under>W</Under>)</span>
      <span>帮助(<Under>H</Under>)</span>
      <MenuClose>✖</MenuClose>
    </MenuBar>

    <ToolRow $pl={12} $pr={10}>
      <Group $gap={9}>
        <CreateIcon />
        <CreateLabel>创建</CreateLabel>
      </Group>
      <Caret $ml={8} />
      <Divider $l={21} $r={13} />
      <Group $gap={16}>
        <FolderIcon />
        <SaveIcon />
        <PrintIcon />
        <MailIcon />
      </Group>
      <Divider $l={13} $r={16} />
      <Group $gap={13}>
        <GearIcon />
        <CommentIcon />
        <TextEditIcon />
        <DocBadge kind="x" />
        <DocBadge kind="swirl" />
        <DocBadge kind="lock" />
      </Group>
      <ExpandBox>
        <ExpandIcon />
      </ExpandBox>
    </ToolRow>

    <ToolRow $alt $pl={10} $pr={16}>
      <Group $gap={10}>
        <RoundArrow />
        <RoundArrow down />
      </Group>
      <PageInput>10</PageInput>
      <PageCount>（10 / 11）</PageCount>
      <Divider $l={14} $r={10} />
      <Group $gap={11}>
        <PressedBox>
          <SelectIcon />
        </PressedBox>
        <HandIcon />
      </Group>
      <Divider $l={12} $r={12} />
      <Group $gap={10}>
        <RoundSign />
        <RoundSign plus />
      </Group>
      <ZoomField>
        <ZoomValue>97%</ZoomValue>
        <ZoomDrop>
          <Caret />
        </ZoomDrop>
      </ZoomField>
      <Divider $l={10} $r={14} />
      <Group $gap={10}>
        <FitWidthIcon />
        <PressedBox>
          <FitPageIcon />
        </PressedBox>
      </Group>
      <SideTabs>
        <SideTab $first>工具</SideTab>
        <SideTab>注释</SideTab>
        <SideTab $last>共享</SideTab>
      </SideTabs>
    </ToolRow>

    <DocArea>
      <Rail>{railIcons}</Rail>
      <Viewer>
        <Page>
          <PageHeader>
            <HeaderMain>
              <HeaderLine>
                <DocTitle>Subaru Telescope: Pattern</DocTitle>
                <Copyright>Canon ® is a registered trademark of Canon Inc. © Canon Inc. © Keisuke Saka</Copyright>
              </HeaderLine>
              <Rule />
            </HeaderMain>
            <Canon>Canon</Canon>
          </PageHeader>
          <PageBody>
            <RingFigure>
              <Ring />
              <RingCaption>
                <Bubble>27</Bubble>
                <CaptionText $size={11.5}>
                  Floor of the lower part
                  <br />
                  of the dome
                </CaptionText>
              </RingCaption>
            </RingFigure>
            <div>
              <Figure $top={0} $left={0}>
                <Caption $pl={3} $mb={8}>
                  <Bubble>28</Bubble>
                  <CaptionText>External elevator tower</CaptionText>
                </Caption>
                <Tower />
              </Figure>
              <Figure $top={61} $left={60}>
                <Caption $pl={10} $mb={3}>
                  <Bubble>29</Bubble>
                  <CaptionText>First-level entrance for the elevator tower</CaptionText>
                </Caption>
                <Entrance />
              </Figure>
            </div>
          </PageBody>
          <PageFoot>
            <PageNumber>10</PageNumber>
          </PageFoot>
          <Pointer width="13" height="22" viewBox="0 0 13 22">
            <path d="M1 1v17l4-3.500 3 6.500 3-1.500-3-6h5z" fill="#fff" stroke="#111" />
          </Pointer>
        </Page>
      </Viewer>
      <ScrollBar>
        <ScrollCap />
        <ScrollArrow>
          <Caret $up />
        </ScrollArrow>
        <Thumb>≡</Thumb>
        <ScrollArrow $top={141}>
          <Caret />
        </ScrollArrow>
      </ScrollBar>
    </DocArea>

    <Taskbar>
      <Orb>
        <OrbFlag />
      </Orb>
      <Grip $ml={23} />
      <Launch>
        {launchIcons.map(icon => (
          <Quick key={icon.key}>{icon}</Quick>
        ))}
      </Launch>
      <Grip $ml={28} />
      <TaskList>
        <TaskButton>
          <Ico w={16} vb="0 0 20 20">
            <path d="M2 4h6l2 2h8v12H2z" fill="#f0bf41" stroke="#ad7d16" />
            <rect x="3" y="8" width="14" height="9" fill="#fbe083" />
          </Ico>
          <span>1000-3-E (F:)</span>
        </TaskButton>
        <TaskButton>
          <Ico w={16} vb="0 0 20 20">
            <BlueM />
          </Ico>
          <span>[纸模型]天文台...</span>
        </TaskButton>
        <TaskButton $active>
          <PdfMark size={16} />
          <span>[天文台]subaru...</span>
        </TaskButton>
      </TaskList>
      <Grip $ml={99} />
      <Tray>
        <Ico w={14} vb="0 0 14 14">
          <rect x="1" y="4" width="12" height="8" fill="#eee" stroke="#222" />
          <path d="M3 6h8M3 8h8M4 10h6" stroke="#555" />
        </Ico>
        <TraySpacer $w={8} />
        <Ico w={12} h={16} vb="0 0 12 16">
          <rect x=".5" y=".5" width="11" height="15" fill="#f6e463" stroke="#111" />
          <Letter x={6} y={12.500} size={12} fill="#1a1a8c">?</Letter>
        </Ico>
        <TraySpacer $w={17} />
        <Ico w={6} h={20} vb="0 0 6 20">
          <rect x="0" y="1" width="5" height="5" fill="#ddd" />
          <path d="M0 14h6l-3 4z" fill="#ddd" />
        </Ico>
        <TraySpacer $w={48} />
        <Ico w={7} h={12} vb="0 0 7 12">
          <path d="M6 1L1 6l5 5" fill="none" stroke="#fff" strokeWidth="2" />
        </Ico>
        <TraySpacer $w={5} />
        <Ico w={16} vb="0 0 20 20">
          <BlueM />
        </Ico>
        <TraySpacer $w={2} />
        <Ico w={16} vb="0 0 20 20">
          <KBall />
        </Ico>
        <TraySpacer $w={2} />
        <Ico w={16} vb="0 0 20 20">
          <rect x="3" y="1" width="14" height="18" rx="1" fill="#1f7cc4" />
          <path d="M1 5l9-2 3 4v12H8V9z" fill="#0f5c9b" />
        </Ico>
        <Ico w={16} vb="0 0 20 20">
          <rect x="7" y="1" width="8" height="10" rx="2" fill="#a5bedb" />
          <rect x="6" y="9" width="7" height="10" rx="2" fill="#8295c4" />
        </Ico>
        <TraySpacer $w={4} />
        <Ico w={16} vb="0 0 20 20">
          <path d="M10 1l8 8h-5v10H9V9H2z" fill="#2fa37a" />
        </Ico>
        <TrayClock>12:08</TrayClock>
      </Tray>
    </Taskbar>

    <Clock />
  </Win>
);

export default App;
